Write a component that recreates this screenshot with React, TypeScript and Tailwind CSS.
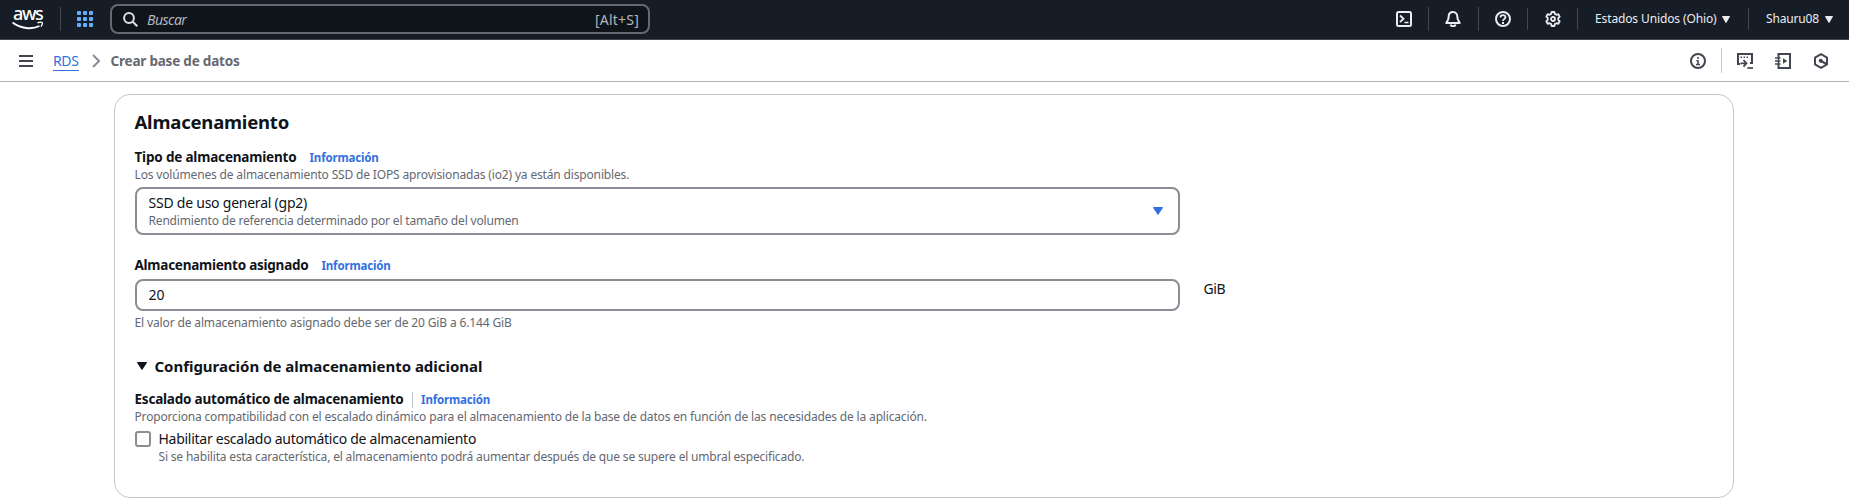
import type { ReactNode } from "react";

function Icon({ children, className = "" }: { children: ReactNode; className?: string }) {
  return (
    <svg
      viewBox="0 0 16 16"
      fill="none"
      stroke="currentColor"
      strokeWidth="2"
      className={`size-4 shrink-0 ${className}`}
    >
      {children}
    </svg>
  );
}

function Caret({ className }: { className: string }) {
  return (
    <svg viewBox="0 0 10 8" preserveAspectRatio="none" className={`shrink-0 ${className}`} fill="currentColor">
      <path d="M.6 0h8.800c.5 0 .7.5.4.9L5.500 7.600c-.2.4-.8.4-1 0L.2.9C-.1.5.1 0 .6 0Z" />
    </svg>
  );
}

function InfoLink() {
  return (
    <a href="#" className="text-[11.5px] leading-[15px] font-bold tracking-[-0.165px] text-[#326fdf]">
      Información
    </a>
  );
}

function Hint({ children, className }: { children: ReactNode; className: string }) {
  return <p className={`text-[12px] leading-[17px] whitespace-nowrap text-[#656871] ${className}`}>{children}</p>;
}

function TopBar() {
  return (
    <header className="flex h-10 items-start border-b border-[#424650] bg-[#161d26] text-[#ebebf0]">
      <div className="flex h-[38px] w-[60px] flex-col items-start pt-[3px] pl-3">
        <span className="h-[18px] pl-px text-[18px] leading-[20px] font-medium tracking-[-1.4px] text-white">aws</span>
        <svg viewBox="0 0 32 9" className="h-[9px] w-8" fill="none" stroke="#fff">
          <path d="M.6 1.600C8.500 7.900 20 8.600 27.500 5" strokeWidth="1.900" />
          <path d="M25.500 1.700c2.500-.6 4.400-.6 4.800 0 .3.700-.2 2.400-1.400 4" strokeWidth="1.400" />
        </svg>
      </div>
      <div className="mt-[7px] h-6 w-px bg-[#424650]" />
      <div className="mt-[11px] ml-4 grid grid-cols-3 gap-[2px]">
        {Array.from({ length: 9 }, (_, i) => (
          <span key={i} className="size-1 rounded-[1px] bg-[#61b0ff]" />
        ))}
      </div>
      <div className="mt-1 ml-[17px] flex h-[30px] w-[540px] items-center rounded-lg border-2 border-[#656871] bg-[#0f141a] pr-[9px] pl-[11px] text-[14px] leading-[19px] text-[#b4b4bb]">
        <svg viewBox="0 0 15 15" className="size-[15px] text-[#dedee3]" fill="none" stroke="currentColor" strokeWidth="2">
          <circle cx="6" cy="6" r="4.900" />
          <path d="m9.500 9.500 4.800 4.800" />
        </svg>
        <span className="ml-[9px] flex-1 tracking-[-0.5px] italic">Buscar</span>
        <span className="tracking-[0.21px]">[Alt+S]</span>
      </div>
      <Icon className="mt-[11px] ml-[746px]">
        <rect x="1" y="1" width="14" height="14" rx="1.500" />
        <path d="m4 4.500 3.500 3.300L4 11" strokeWidth="1.800" />
        <path d="M8.500 11.500h4" strokeWidth="1.600" />
      </Icon>
      <div className="mt-[7px] ml-4 h-6 w-px bg-[#424650]" />
      <Icon className="mt-[11px] ml-4">
        <path
          d="M8 1C5.300 1 3.700 3 3.700 5.500 3.700 8.800 2.600 9.500 1.300 12h13.400c-1.300-2.500-2.400-3.200-2.400-6.500C12.300 3 10.700 1 8 1Z"
          strokeLinejoin="round"
        />
        <path d="M5.500 13.500c.6 2.400 4.400 2.400 5 0" />
      </Icon>
      <div className="mt-[7px] ml-[17px] h-6 w-px bg-[#424650]" />
      <Icon className="mt-[11px] ml-4">
        <circle cx="8" cy="8" r="7" />
        <path d="M5.500 6.500C5.500 3.400 10.500 3.500 10.500 6.300 10.500 7.900 8 7.900 8 10" strokeWidth="1.800" />
        <path d="M8 11v2" />
      </Icon>
      <div className="mt-2 ml-4 h-[22px] w-px bg-[#424650]" />
      <Icon className="mt-[11px] ml-[17px]">
        <path
          d="M6.600 1h2.800l.4 1.900 1.600.9 1.900-.6 1.400 2.400L13.300 7v2l1.400 1.400-1.400 2.400-1.900-.6-1.600.9-.4 1.900H6.600l-.4-1.900-1.600-.9-1.900.6-1.400-2.400L2.700 9V7L1.300 5.600l1.400-2.400 1.900.6 1.600-.9L6.600 1Z"
          strokeLinejoin="round"
          strokeWidth="1.800"
        />
        <circle cx="8" cy="8" r="2" strokeWidth="1.800" />
      </Icon>
      <div className="mt-2 ml-4 h-[22px] w-px bg-[#424650]" />
      <div className="mt-[10px] ml-[17px] flex w-[153px] items-start">
        <span className="w-[127px] text-[12px] leading-[17px] tracking-[-0.125px] whitespace-nowrap">Estados Unidos (Ohio)</span>
        <Caret className="mt-[6px] h-[7px] w-2" />
      </div>
      <div className="mt-2 h-[22px] w-px bg-[#424650]" />
      <div className="mt-[10px] ml-[17px] flex items-start">
        <span className="w-[59px] text-[12px] leading-[17px] tracking-[-0.157px]">Shauru08</span>
        <Caret className="mt-[6px] h-[7px] w-2" />
      </div>
    </header>
  );
}

function BreadcrumbBar() {
  return (
    <nav className="flex h-[42px] items-start border-b border-[#b4b4bb] text-[#424650]">
      <svg viewBox="0 0 14 12" className="mt-[15px] ml-[19px] h-3 w-[14px]" fill="currentColor">
        <path d="M0 0h14v2H0zM0 5h14v2H0zM0 10h14v2H0z" />
      </svg>
      <a
        href="#"
        className="mt-[11px] ml-5 h-5 border-b border-[#326fdf] text-[14px] leading-[19px] tracking-[-0.37px] text-[#326fdf]"
      >
        RDS
      </a>
      <svg viewBox="0 0 8 14" className="mt-[14px] ml-[13px] h-[14px] w-2" fill="none" stroke="#8c8c94" strokeWidth="2">
        <path d="m1 1 6 6-6 6" />
      </svg>
      <span className="mt-3 ml-[11px] text-[13.5px] leading-[18px] font-bold tracking-[-0.205px] text-[#656871]">
        Crear base de datos
      </span>
      <div className="mt-2 ml-auto flex items-center pr-5">
        <Icon>
          <circle cx="8" cy="8" r="7" />
          <path d="M8 4v2M6.500 7.700H8V11M6 11.500h4" strokeWidth="1.500" />
        </Icon>
        <div className="mr-[15px] ml-[15px] h-[25px] w-px bg-[#c6c6cd]" />
        <Icon>
          <path d="M3 11H1V1h14v9h-2" />
          <path d="M3.500 4.200h1.500M6.500 4.200H8M9.500 4.200H11" strokeWidth="1.500" />
          <path d="M3.500 10.300h6M6.500 7l3 3.300-3 3.300" strokeWidth="1.800" />
          <path d="M10.300 15H16" strokeWidth="1.700" />
        </Icon>
        <Icon className="ml-[22px]">
          <path d="M3.500 4V1H15v14H3.500v-3" />
          <path d="M0 5h5.500M0 8h5.500M0 11h5.500M3.500 4v8" strokeWidth="1.500" />
          <path d="M8 5.300v5.400L12.300 8z" fill="currentColor" stroke="none" />
        </Icon>
        <Icon className="ml-[22px]">
          <path d="m8 1.200 6 3.400v6.800l-6 3.400-6-3.400V4.600z" strokeLinejoin="round" />
          <circle cx="7.700" cy="7.700" r="2" fill="currentColor" stroke="none" />
          <path d="m8 8 5.500 3" />
        </Icon>
      </div>
    </nav>
  );
}

export default function App() {
  return (
    <div className="h-[502px] w-[1851px] overflow-hidden bg-white font-['Noto_Sans',sans-serif] text-[#0f141a]">
      <div className="w-[1849px]">
        <TopBar />
        <BreadcrumbBar />
        <main className="pt-3 pl-[114px]">
          <section className="h-[404px] w-[1620px] rounded-2xl border border-[#c6c6cd] pt-[14px] pr-5 pl-[19.5px]">
            <h2 className="text-[18.5px] leading-[25px] font-bold tracking-[-0.2px]">Almacenamiento</h2>

            <div className="mt-[14px] flex h-[18px] items-baseline gap-[13px]">
              <label className="text-[13.5px] leading-[18px] font-bold tracking-[-0.18px]">Tipo de almacenamiento</label>
              <InfoLink />
            </div>
            <Hint className="tracking-[-0.16px]">
              Los volúmenes de almacenamiento SSD de IOPS aprovisionadas (io2) ya están disponibles.
            </Hint>
            <button className="mt-1 ml-[0.5px] flex h-12 w-[1045px] items-start rounded-lg border-2 border-[#8c8c94] pt-1 pr-[15px] pl-[11.5px] text-left">
              <span className="flex-1">
                <span className="block text-[14px] leading-[19px] tracking-[-0.235px]">SSD de uso general (gp2)</span>
                <span className="block text-[12px] leading-[17px] tracking-[-0.177px] text-[#656871]">
                  Rendimiento de referencia determinado por el tamaño del volumen
                </span>
              </span>
              <Caret className="mt-[14px] h-2 w-[10px] text-[#326fdf]" />
            </button>

            <div className="mt-[21px] flex h-[18px] items-baseline gap-[13px]">
              <label className="text-[13.5px] leading-[18px] font-bold tracking-[-0.245px]">Almacenamiento asignado</label>
              <InfoLink />
            </div>
            <div className="mt-[5px] ml-[0.5px] flex h-8 items-start">
              <div className="h-8 w-[1045px] rounded-lg border-2 border-[#8c8c94] pt-1 pl-[11.5px] text-[14px] leading-[19px]">
                20
              </div>
              <span className="ml-[23.5px] text-[14px] leading-[19px] tracking-[-0.45px]">GiB</span>
            </div>
            <Hint className="mt-[3px] tracking-[-0.135px]">
              El valor de almacenamiento asignado debe ser de 20 GiB a 6.144 GiB
            </Hint>

            <h3 className="mt-[25px] flex h-5 items-start pl-[2.5px] text-[15px] leading-5 font-bold tracking-[-0.03px]">
              <Caret className="mt-[6px] mr-[7.5px] h-2 w-[10px]" />
              Configuración de almacenamiento adicional
            </h3>

            <div className="mt-[14px] flex h-[18px] items-baseline">
              <label className="text-[13.5px] leading-[18px] font-bold tracking-[-0.21px]">
                Escalado automático de almacenamiento
              </label>
              <span className="mt-[2px] mr-2 ml-[8.5px] h-4 w-px self-start bg-[#c6c6cd]" />
              <InfoLink />
            </div>
            <Hint className="tracking-[-0.165px]">
              Proporciona compatibilidad con el escalado dinámico para el almacenamiento de la base de datos en función de las
              necesidades de la aplicación.
            </Hint>
            <div className="mt-1 ml-[0.5px] flex items-start gap-[7.5px]">
              <span className="mt-[2px] size-4 rounded-[3px] border-2 border-[#8c8c94]" />
              <div>
                <div className="text-[14px] leading-[19px] tracking-[-0.27px]">
                  Habilitar escalado automático de almacenamiento
                </div>
                <Hint className="tracking-[-0.177px]">
                  Si se habilita esta característica, el almacenamiento podrá aumentar después de que se supere el umbral
                  especificado.
                </Hint>
              </div>
            </div>
          </section>
        </main>
      </div>
    </div>
  );
}
